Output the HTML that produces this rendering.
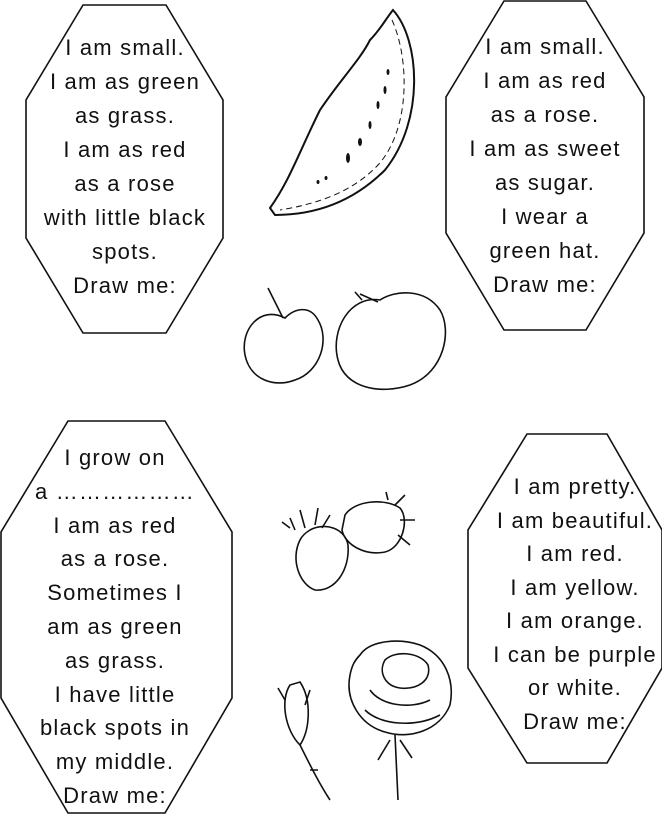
<!DOCTYPE html>
<html><head><meta charset="utf-8">
<style>
html,body{margin:0;padding:0;background:#fff;}
body{width:662px;height:815px;position:relative;overflow:hidden;font-family:"Liberation Sans",sans-serif;color:#111;}
svg{position:absolute;left:0;top:0;}
.t{position:absolute;text-align:center;font-size:22px;line-height:34px;white-space:nowrap;letter-spacing:1.2px;}
</style></head><body>
<svg width="662" height="815" viewBox="0 0 662 815" fill="none" stroke="#111" stroke-width="1.6">
<polygon points="83,5 166,5 223,100 223,238 166,333 83,333 26,238 26,100"/>
<polygon points="504,1 586,1 644,97 644,233 586,330 504,330 446,233 446,97"/>
<polygon points="68,421 165,421 232,532 232,698 165,813 68,813 1,698 1,532"/>
<polygon points="527,434 607,434 662,530 662,668 607,763 527,763 468,668 468,530"/>
<path d="M393,10 C420,40 425,120 385,170 C350,205 310,215 275,215 L270,208 C290,180 300,150 320,110 C340,80 360,60 370,40 C380,30 385,20 393,10 Z" stroke-width="2"/>
<path d="M392,20 C410,60 410,130 378,165 C350,195 310,205 280,210" stroke-dasharray="6,4" stroke-width="1"/>
<g fill="#111" stroke="none">
<ellipse cx="348" cy="158" rx="2" ry="5"/><ellipse cx="360" cy="142" rx="2" ry="4"/><ellipse cx="370" cy="125" rx="1.5" ry="4"/>
<ellipse cx="378" cy="105" rx="1.5" ry="4"/><ellipse cx="385" cy="90" rx="1.5" ry="4"/><ellipse cx="388" cy="72" rx="1.5" ry="3"/>
<ellipse cx="326" cy="178" rx="1.5" ry="2"/><ellipse cx="318" cy="182" rx="1.5" ry="2"/>
</g>
<path d="M285,318 C260,305 240,330 245,355 C250,380 275,388 295,380 C320,372 330,340 318,320 C310,305 295,308 285,318 Z"/>
<path d="M283,318 L270,292 M268,288 L272,296"/>
<path d="M380,300 C350,295 330,330 338,360 C345,388 380,395 410,385 C445,372 452,330 440,310 C425,288 395,290 380,300 Z"/>
<path d="M378,302 L360,294 M355,292 L362,300"/>
<path d="M300,540 C290,560 300,585 315,590 C335,592 350,570 348,545 C345,528 325,522 310,530 C305,533 302,536 300,540 Z"/>
<path d="M295,530 L290,518 M305,528 L300,510 M315,525 L318,508 M322,528 L330,515 M290,528 L282,522"/>
<path d="M345,515 C355,500 385,498 400,508 C410,520 402,548 385,552 C365,556 345,545 342,530 Z"/>
<path d="M395,505 L405,495 M400,520 L415,520 M398,535 L410,545 M388,500 L386,492"/>
<path d="M360,655 C370,640 400,638 420,645 C445,655 455,680 450,705 C440,730 410,740 385,732 C360,725 345,700 350,675 C352,665 355,660 360,655 Z"/>
<path d="M385,660 C395,650 420,652 428,665 C432,680 418,690 400,688 C385,686 378,672 385,660 Z"/>
<path d="M370,690 C380,705 410,710 430,700 M365,710 C380,725 415,728 440,715"/>
<path d="M395,735 L398,800 M390,740 L378,760 M400,740 L412,758"/>
<path d="M290,685 C280,700 285,730 300,745 C310,730 312,700 300,682 Z"/>
<path d="M300,745 C310,765 320,785 330,800 M278,688 L285,700 M310,690 L305,705 M318,770 L310,770"/>
</svg>
<div class="t" style="left:15px;width:220px;top:31px;">I am small.<br>I am as green<br>as grass.<br>I am as red<br>as a rose<br>with little black<br>spots.<br>Draw me:</div>
<div class="t" style="left:436px;width:218px;top:30px;">I am small.<br>I am as red<br>as a rose.<br>I am as sweet<br>as sugar.<br>I wear a<br>green hat.<br>Draw me:</div>
<div class="t" style="left:2px;width:226px;top:441px;line-height:33.8px;">I grow on<br>a ………………<br>I am as red<br>as a rose.<br>Sometimes I<br>am as green<br>as grass.<br>I have little<br>black spots in<br>my middle.<br>Draw me:</div>
<div class="t" style="left:466px;width:218px;top:470px;line-height:33.5px;">I am pretty.<br>I am beautiful.<br>I am red.<br>I am yellow.<br>I am orange.<br>I can be purple<br>or white.<br>Draw me:</div>
</body></html>
